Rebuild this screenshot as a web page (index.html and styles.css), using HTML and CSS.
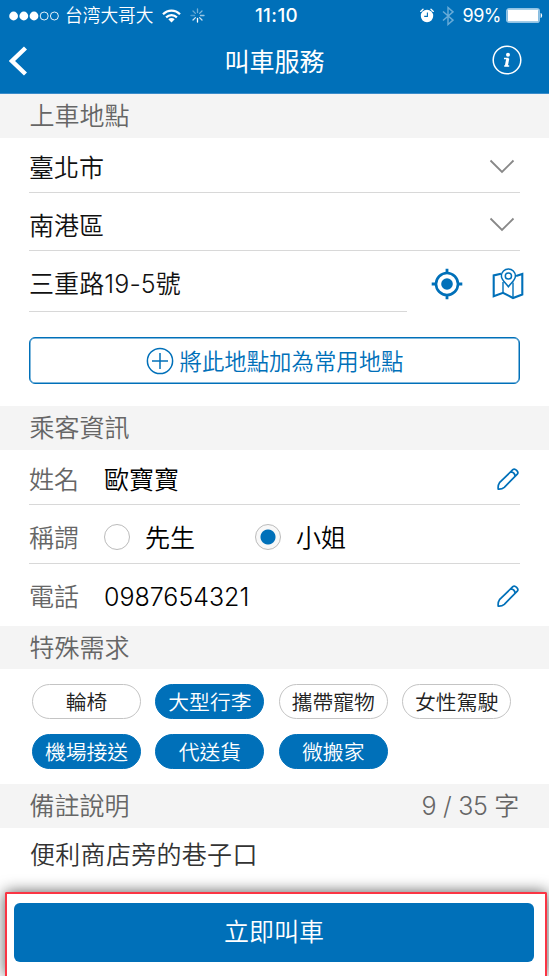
FILE: index.html
```html
<!DOCTYPE html>
<html lang="zh-Hant">
<head>
<meta charset="utf-8">
<title>叫車服務</title>
<link rel="stylesheet" href="styles.css">
</head>
<body>
<div class="screen">
  <header class="top">
    <div class="status">
      <div class="status-left">
        <svg class="signal" width="50" height="10" viewBox="0 0 50 10"><g fill="#fff"><circle cx="4.6" cy="5" r="4.4"/><circle cx="14.8" cy="5" r="4.4"/><circle cx="25" cy="5" r="4.4"/></g><g fill="none" stroke="#fff" stroke-width=".9"><circle cx="35.2" cy="5" r="4"/><circle cx="45.4" cy="5" r="4"/></g></svg>
        <span class="carrier">台湾大哥大</span>
        <svg class="wifi" width="19" height="14" viewBox="0 0 19 14"><g fill="none" stroke="#fff" stroke-width="2.2"><path d="M1 5.2C5.8.3 13.2.3 18 5.2"/><path d="M4.1 8.4c3.1-3 7.7-3 10.8 0"/></g><path d="M9.5 13.6l-3.2-3.3c1.8-1.7 4.6-1.7 6.4 0z" fill="#fff"/></svg>
        <svg class="spinner" width="15" height="15" viewBox="0 0 15 15"><g stroke="#fff" stroke-width="1.3" stroke-linecap="round"><path d="M7.5 1v3.6" opacity=".45"/><path d="M12 3L9.6 5.4" opacity=".5"/><path d="M14 7.5h-3.6" opacity=".6"/><path d="M12 12L9.6 9.6" opacity=".8"/><path d="M7.5 14v-3.6"/><path d="M3 12l2.4-2.4" opacity=".8"/><path d="M1 7.5h3.6" opacity=".3"/><path d="M3 3l2.4 2.4" opacity=".4"/></g></svg>
      </div>
      <div class="clock">11:10</div>
      <div class="status-right">
        <svg width="14" height="15" viewBox="0 0 14 15"><circle cx="7" cy="8" r="6.2" fill="#fff"/><path d="M.7 3.4L3 1.3M13.3 3.4L11 1.3" stroke="#fff" stroke-width="1.3" stroke-linecap="round"/><path d="M7.4 4.4v4H4.2" stroke="#0070b9" stroke-width="1.1" fill="none"/></svg>
        <svg class="bt" width="12" height="20" viewBox="0 0 12 20"><path d="M1 5.5l10 8.6-5 4.4v-17l5 4.4-10 8.6" fill="none" stroke="#69acd8" stroke-width="1.4"/></svg>
        <span class="percent">99%</span>
        <svg class="battery" width="37" height="15" viewBox="0 0 37 15"><rect x=".7" y=".7" width="32.6" height="13.6" rx="2.4" fill="none" stroke="#91c3e5" stroke-width="1.4"/><rect x="1.6" y="1.6" width="30.8" height="11.8" rx="1" fill="#fff"/><path d="M34.6 5c2 .5 2 4.5 0 5z" fill="#fff"/></svg>
      </div>
    </div>
    <nav class="nav">
      <svg class="back" width="18" height="30" viewBox="0 0 18 30"><path d="M16.5 2L3 15l13.5 13" fill="none" stroke="#fff" stroke-width="4.4"/></svg>
      <h1>叫車服務</h1>
      <svg class="info" width="30" height="30" viewBox="0 0 30 30"><circle cx="15" cy="15" r="13.8" fill="none" stroke="#fff" stroke-width="1.5"/><circle cx="16" cy="9.7" r="2" fill="#fff"/><path d="M12 13.6h4.6M12.2 21h5" fill="none" stroke="#fff" stroke-width="1.5"/><path d="M15.8 13.5l-1.5 7.5" fill="none" stroke="#fff" stroke-width="3"/></svg>
    </nav>
  </header>

  <h2 class="section">上車地點</h2>
  <div class="place">
    <div class="row city"><span>臺北市</span><svg class="chev" width="26" height="15" viewBox="0 0 26 15"><path d="M1.5 1.5L13 13 24.5 1.5" fill="none" stroke="#888" stroke-width="1.8"/></svg></div>
    <div class="row district"><span>南港區</span><svg class="chev" width="26" height="15" viewBox="0 0 26 15"><path d="M1.5 1.5L13 13 24.5 1.5" fill="none" stroke="#888" stroke-width="1.8"/></svg></div>
    <div class="address">
      <div class="row street"><span>三重路19-5號</span></div>
      <svg class="locate" width="32" height="32" viewBox="0 0 32 32"><circle cx="16" cy="16" r="11" fill="none" stroke="#0070b9" stroke-width="2.6"/><circle cx="16" cy="16" r="5.8" fill="#0070b9"/><path d="M16 .7V5M16 27v4.3M.7 16H5M27 16h4.3" stroke="#0070b9" stroke-width="2.8"/></svg>
      <svg class="map" width="32" height="32" viewBox="0 0 32 32"><g fill="none" stroke="#0070b9"><path d="M9 5.700L1.700 7.400v20.900l9.300-3.500 10 5.200 9.300-3.500V6l-6.200 2" stroke-width="2.100"/><path d="M11 14v10.800M21 14.500V30" stroke-width="1.400"/><path d="M16.400 18.800c-2.800-4-7-6.800-7-10.900a7 7 0 0 1 14 0c0 4.100-4.200 6.900-7 10.900z" fill="#fff" stroke-width="1.500"/><circle cx="16.400" cy="8" r="3.100" stroke-width="1.500"/></g></svg>
    </div>
    <button class="favorite"><svg width="28" height="28" viewBox="0 0 28 28"><circle cx="14" cy="14" r="12.6" fill="none" stroke="#0070b9" stroke-width="1.5"/><path d="M14 6v16M6 14h16" stroke="#0070b9" stroke-width="1.5"/></svg><span>將此地點加為常用地點</span></button>
  </div>

  <h2 class="section">乘客資訊</h2>
  <div class="passenger">
    <div class="row name"><span class="label">姓名</span><span>歐寶寶</span><svg class="pencil" width="24" height="24" viewBox="0 0 24 24"><path d="M3.500 15.700L16.800 2.700c2.200-2 6.500 2.200 4.500 4.500L8.300 20.300c-1.500 1.300-3.500 2-6.100 1.800-.3-2.600.2-4.900 1.300-6.400zM14.600 4.900c2.400.2 4.300 2.100 4.500 4.500" fill="none" stroke="#0070b9" stroke-width="1.700" stroke-linejoin="round"/></svg></div>
    <div class="row title"><span class="label">稱謂</span><i class="radio"></i><span class="mr">先生</span><i class="radio on"></i><span>小姐</span></div>
    <div class="row phone"><span class="label">電話</span><span class="number">0987654321</span><svg class="pencil" width="24" height="24" viewBox="0 0 24 24"><path d="M3.500 15.700L16.800 2.700c2.200-2 6.500 2.200 4.500 4.500L8.300 20.300c-1.500 1.300-3.500 2-6.100 1.800-.3-2.600.2-4.900 1.300-6.400zM14.600 4.900c2.400.2 4.300 2.100 4.500 4.500" fill="none" stroke="#0070b9" stroke-width="1.700" stroke-linejoin="round"/></svg></div>
  </div>

  <h2 class="section">特殊需求</h2>
  <div class="needs">
    <span class="chip">輪椅</span><span class="chip on">大型行李</span><span class="chip">攜帶寵物</span><span class="chip">女性駕駛</span>
    <span class="chip on">機場接送</span><span class="chip on">代送貨</span><span class="chip on">微搬家</span>
  </div>

  <h2 class="section"><span>備註說明</span><span class="count">9 / 35 字</span></h2>
  <div class="note">便利商店旁的巷子口</div>
  <footer class="action"><button class="call">立即叫車</button></footer>
</div>
</body>
</html>
```
FILE: styles.css
```css
* { box-sizing: border-box; }
body {
  margin: 0;
  background: #fff;
  color: #111;
  font-family: Inter, "Noto Sans CJK TC", sans-serif;
  font-size: 25px;
  font-weight: 350;
}
.screen {
  width: 549px;
  height: 976px;
  overflow: hidden;
  display: flex;
  flex-direction: column;
}
svg { display: block; flex: none; }
button { font: inherit; padding: 0; }

.top { height: 94px; background: #0070b9; border-bottom: 1px solid #3a8cca; color: #fff; flex: none; }
.status { height: 30px; display: grid; grid-template-columns: 1fr auto 1fr; align-items: center; padding: 0 7px 0 9px; }
.status-left, .status-right { display: flex; align-items: center; }
.status-right { justify-content: flex-end; margin-right: -1px; }
.carrier { font-size: 17.7px; line-height: 28px; margin-left: 6px; padding-top: 1px; }
.wifi { margin-left: 9px; }
.spinner { margin-left: 9px; }
.clock { font-size: 18.8px; font-weight: 500; line-height: 30px; letter-spacing: .4px; padding: 1px 0 0 2px; }
.bt { margin-left: 8px; }
.percent { font-size: 18px; font-weight: 400; margin-left: 9px; line-height: 30px; letter-spacing: -.5px; padding-top: 1px; }
.battery { margin-left: 5px; }
.nav { height: 63px; display: grid; grid-template-columns: 1fr auto 1fr; align-items: center; padding: 0 27px 0 9px; }
.nav h1 { margin: 0 0 0 18px; font-size: 25px; font-weight: 400; line-height: 60px; }
.info { justify-self: end; margin-bottom: 3px; }
.back { margin-bottom: 2px; }

.section {
  margin: 0;
  height: 43.5px;
  flex: none;
  padding: 0 30px 0 29.5px;
  background: #f4f4f4;
  color: #666;
  font-size: 25px;
  font-weight: 350;
  line-height: 45px;
  display: flex;
  justify-content: space-between;
}
.count { letter-spacing: -.3px; }
.row { display: flex; align-items: center; border-bottom: 1px solid #d8d8d8; line-height: 40px; }
.row span { position: relative; top: 1px; }
.place { height: 268.5px; flex: none; padding: 0 29px; }
.city { height: 55px; padding-top: 4px; }
.district { height: 58px; padding-top: 7px; }
.chev { margin-left: auto; margin-right: 5px; }
.address { height: 61px; display: flex; margin-right: -4px; }
.street { width: 378px; height: 61px; padding-top: 5px; }
.street span { letter-spacing: .1px; }
.locate { margin: 17px 0 0 23.5px; }
.map { margin: 17px 0 0 auto; }
.favorite {
  width: 491px;
  height: 47px;
  margin-top: 25.5px;
  display: flex;
  align-items: center;
  justify-content: center;
  gap: 6px;
  border: 1.5px solid #0070b9;
  box-shadow: inset 0 0 0 .5px #0070b9;
  border-radius: 6px;
  background: #fff;
  color: #0070b9;
  font-size: 22.4px;
}
.favorite span { line-height: 30px; padding-top: 2px; }

.passenger { height: 176px; flex: none; padding: 0 29px; }
.passenger .row { color: #000; }
.passenger .label { color: #666; width: 75px; }
.name { height: 55.5px; padding-top: 4px; }
.title { height: 58.5px; padding-top: 7px; }
.phone { height: 62px; border: 0; padding-top: 3px; }
.pencil { margin-left: auto; }
.radio { width: 26px; height: 26px; border: 1px solid #bbb; border-radius: 50%; margin-right: 15px; flex: none; }
.radio.on { background: radial-gradient(circle, #0070b9 7px, #f8f8f8 8px); }
.mr { margin-right: 60px; }

.needs { height: 115px; flex: none; display: grid; grid-template-columns: repeat(4, 109px); grid-auto-rows: 35px; column-gap: 14.4px; row-gap: 15px; padding: 15px 0 0 32px; }
.chip { border: 1px solid #c4c4c4; border-radius: 18px; text-align: center; font-size: 20.8px; line-height: 35px; color: #222; }
.chip.on { background: #0070b9; border-color: #0070b9; color: #fff; }

.note { height: 64px; flex: none; padding-left: 30px; line-height: 55px; color: #333; letter-spacing: .3px; }
.action {
  margin: 0 2px 0 5px;
  flex: 1;
  padding: 9px 7px 0 7px;
  border: 2px solid #fa3544;
  border-bottom: 0;
  border-radius: 2px 2px 0 0;
  background: #fff;
  box-shadow: 0 0 15px rgba(0, 0, 0, .65);
}
.call { display: block; width: 520px; height: 59px; border: 0; border-radius: 6px; background: #0070b9; color: #fff; line-height: 59px; }
```
